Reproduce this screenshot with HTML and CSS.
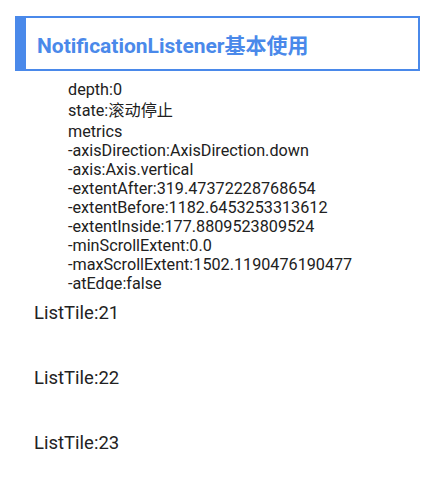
FILE: index.html
```html
<!DOCTYPE html>
<html>
<head>
<meta charset="utf-8">
<link rel="stylesheet" href="styles.css">
</head>
<body>
<div class="header"><span class="title">NotificationListener基本使用</span></div>
<div class="info">
  <div class="line">depth:0</div>
  <div class="line cjk">state:滚动停止</div>
  <div class="line">metrics</div>
  <div class="line">-axisDirection:AxisDirection.down</div>
  <div class="line">-axis:Axis.vertical</div>
  <div class="line">-extentAfter:319.47372228768654</div>
  <div class="line">-extentBefore:1182.6453253313612</div>
  <div class="line">-extentInside:177.8809523809524</div>
  <div class="line">-minScrollExtent:0.0</div>
  <div class="line">-maxScrollExtent:1502.1190476190477</div>
  <div class="line">-atEdge:false</div>
</div>
<div class="tiles">
  <div class="tile">ListTile:21</div>
  <div class="tile">ListTile:22</div>
  <div class="tile">ListTile:23</div>
</div>
</body>
</html>
```
FILE: styles.css
```css
html, body {
  margin: 0;
  padding: 0;
  background: #ffffff;
}
body {
  font-family: Roboto, "Noto Sans CJK SC", sans-serif;
  color: #212121;
  width: 439px;
  height: 500px;
  overflow: hidden;
}
.header {
  margin: 16px 19px 0 15px;
  height: 51px;
  border: 2px solid #4a89ea;
  border-left-width: 11px;
  display: flex;
  align-items: center;
  padding-left: 11px;
}
.title {
  font-size: 21px;
  font-weight: bold;
  color: #4a89ea;
}
.info {
  height: 210px;
  overflow: hidden;
  padding: 9px 0 0 68px;
  font-size: 16.2px;
  line-height: 19px;
}
.cjk {
  line-height: 23px;
}
.tiles {
  display: flex;
  flex-direction: column;
}
.tile {
  height: 65px;
  box-sizing: border-box;
  padding: 12px 0 0 34px;
  font-size: 18.5px;
  line-height: 22px;
  color: #222;
}
```
